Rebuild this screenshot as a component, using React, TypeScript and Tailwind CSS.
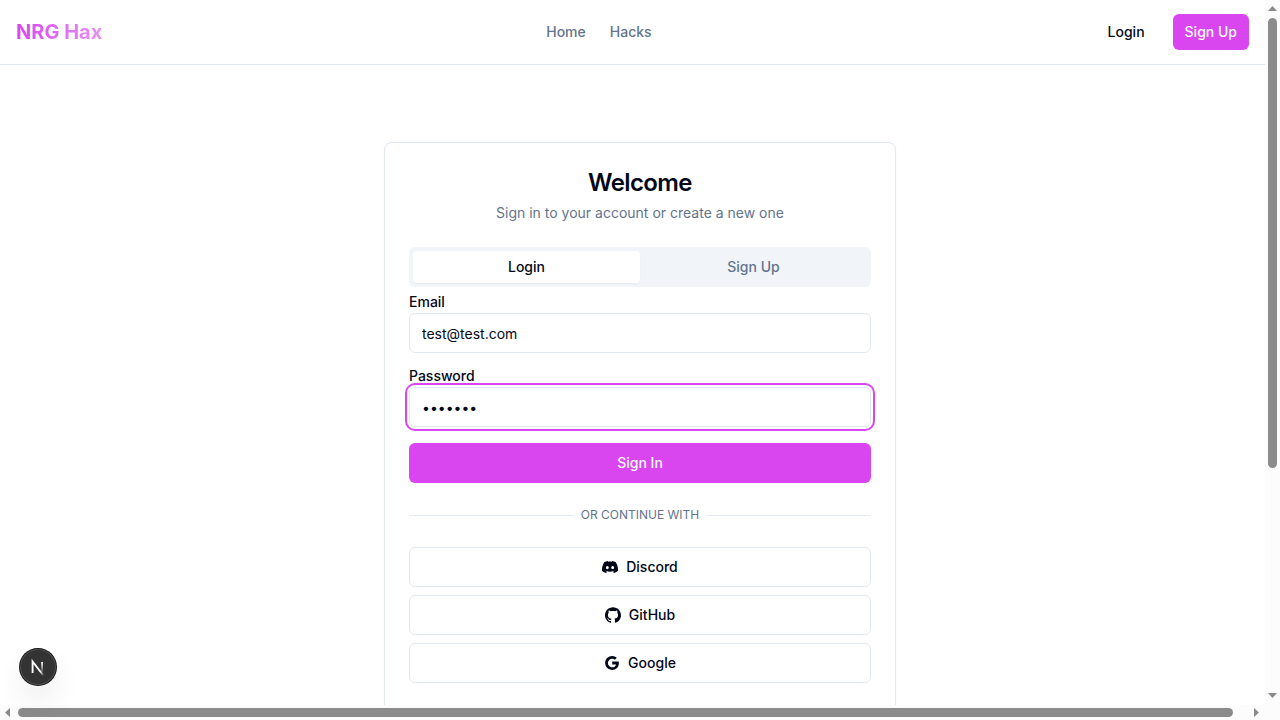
import type { ReactNode } from 'react';
import { SiDiscord, SiGithub } from 'react-icons/si';
import { IoLogoGoogle } from 'react-icons/io5';

function Header() {
  return (
    <header className="flex h-[65px] w-[1265px] items-center justify-between border-b border-[#e2e8f0] bg-white px-4">
      <a className="bg-gradient-to-r from-[#d946ef] to-[#d946ef]/60 bg-clip-text text-xl leading-7 font-bold text-transparent">
        NRG Hax
      </a>
      <nav className="flex items-center gap-6 text-sm font-medium text-[#64748b]">
        <a>Home</a>
        <a>Hacks</a>
      </nav>
      <div className="flex items-center gap-4 text-sm font-medium">
        <button className="h-9 rounded-md px-3">Login</button>
        <button className="h-9 rounded-md bg-[#d946ef] px-3 text-[#f8fafc]">Sign Up</button>
      </div>
    </header>
  );
}

function Field({ label, type, value, focused }: { label: string; type: string; value: string; focused?: boolean }) {
  return (
    <div className="flex flex-col gap-1">
      <label className="text-sm leading-none font-medium">{label}</label>
      <input
        type={type}
        defaultValue={value}
        className={
          focused
            ? 'h-10 w-full rounded-md border border-[#e2e8f0] bg-white px-3 py-2 text-sm ring-2 ring-[#d946ef] ring-offset-2 outline-none'
            : 'h-10 w-full rounded-md border border-[#e2e8f0] bg-white px-3 py-2 text-sm outline-none'
        }
      />
    </div>
  );
}

function ProviderButton({ icon, children }: { icon: ReactNode; children: ReactNode }) {
  return (
    <button className="flex h-10 w-full items-center justify-center gap-2 rounded-md border border-[#e2e8f0] bg-white text-sm font-medium">
      {icon}
      {children}
    </button>
  );
}

function AuthCard() {
  return (
    <section className="h-[640px] w-[512px] shrink-0 rounded-lg border border-[#e2e8f0] bg-white p-6 shadow-xs">
      <div className="flex flex-col gap-1 pb-6 text-center">
        <h1 className="text-2xl font-semibold tracking-tight">Welcome</h1>
        <p className="text-sm text-[#64748b]">Sign in to your account or create a new one</p>
      </div>
      <div className="grid h-10 grid-cols-2 rounded-md bg-[#f1f5f9] p-1 text-sm font-medium text-[#64748b]">
        <button className="rounded-sm bg-white text-[#020817] shadow-xs">Login</button>
        <button className="rounded-sm">Sign Up</button>
      </div>
      <form className="mt-2 flex flex-col gap-4">
        <Field label="Email" type="text" value="test@test.com" />
        <Field label="Password" type="password" value="testing" focused />
        <button type="button" className="h-10 w-full rounded-md bg-[#d946ef] text-sm font-medium text-[#f8fafc]">
          Sign In
        </button>
      </form>
      <div className="my-6 flex items-center gap-2 text-xs text-[#64748b] uppercase">
        <span className="mt-px h-px flex-1 bg-[#e2e8f0]" />
        <span>Or continue with</span>
        <span className="mt-px h-px flex-1 bg-[#e2e8f0]" />
      </div>
      <div className="flex flex-col gap-2">
        <ProviderButton icon={<SiDiscord className="size-4" />}>Discord</ProviderButton>
        <ProviderButton icon={<SiGithub className="size-4" />}>GitHub</ProviderButton>
        <ProviderButton icon={<IoLogoGoogle className="size-4" />}>Google</ProviderButton>
      </div>
    </section>
  );
}

function DevBadge() {
  return (
    <div className="absolute top-[649px] left-5 size-9 rounded-full bg-[#333333] shadow-[0_0_0_1px_#171717,inset_0_0_0_1px_rgba(255,255,255,0.14),0_16px_32px_-8px_rgba(0,0,0,0.24)]">
      <svg width="36" height="36" viewBox="0 0 36 36" fill="none">
        <defs>
          <linearGradient id="diagonal" x1="9.96" y1="11.12" x2="15.48" y2="17.97" gradientUnits="userSpaceOnUse">
            <stop stopColor="white" />
            <stop offset="0.604" stopColor="white" stopOpacity="0" />
          </linearGradient>
          <linearGradient id="stem" x1="11.82" y1="1.4" x2="11.79" y2="13" gradientUnits="userSpaceOnUse">
            <stop stopColor="white" />
            <stop offset="1" stopColor="white" stopOpacity="0" />
          </linearGradient>
        </defs>
        <g transform="translate(10.25 11.5)">
          <path d="M13.3 15.2 L2.34 1 V12.6" stroke="url(#diagonal)" strokeWidth="1.86" />
          <path d="M11.825 1.5 V13.1" stroke="url(#stem)" strokeWidth="1.86" />
        </g>
      </svg>
    </div>
  );
}

function Arrow({ points, className }: { points: string; className: string }) {
  return (
    <svg className={className} viewBox="0 0 15 15">
      <polygon points={points} fill="#8b8b8b" />
    </svg>
  );
}

export default function App() {
  return (
    <div className="relative grid h-[720px] w-[1280px] grid-cols-[1265px_15px] grid-rows-[705px_15px] overflow-hidden bg-white font-['Inter',sans-serif] text-[#020817] antialiased">
      <div className="overflow-hidden">
        <Header />
        <main className="flex w-[1280px] justify-center pt-[77px]">
          <AuthCard />
        </main>
      </div>
      <div className="flex flex-col items-center bg-[#fcfcfc]">
        <Arrow className="size-[15px]" points="7.5,6 12,11 3,11" />
        <div className="mt-[3px] h-[450px] w-[9px] rounded-full bg-[#8b8b8b]" />
        <Arrow className="mt-auto size-[15px]" points="3,3 12,3 7.5,8" />
      </div>
      <div className="flex items-center bg-[#fcfcfc]">
        <Arrow className="size-[15px]" points="10,3 10,12 5,7.5" />
        <div className="ml-[3px] h-[9px] w-[1215px] rounded-full bg-[#8b8b8b]" />
        <Arrow className="ml-auto size-[15px]" points="4,3 4,12 9,7.5" />
      </div>
      <div className="bg-[#fcfcfc]" />
      <DevBadge />
    </div>
  );
}
